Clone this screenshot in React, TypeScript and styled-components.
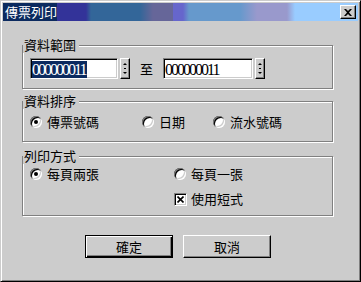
import React from "react";
import styled, { createGlobalStyle } from "styled-components";

const Global = createGlobalStyle`
  html, body { margin: 0; padding: 0; background: #cccccc; }
  body {
    font-family: "Noto Sans CJK TC", "Noto Sans CJK SC", "Noto Sans", sans-serif;
    font-size: 13px;
    color: #000;
  }
`;

const Window = styled.div`
  box-sizing: border-box;
  width: 361px;
  height: 282px;
  background: #cccccc;
  border: 1px solid;
  border-color: #cccccc #000 #000 #cccccc;
  box-shadow: inset 1px 1px #fff, inset -1px -1px #808080;
  padding: 2px;
  display: flex;
  flex-direction: column;
`;

const TitleBar = styled.div`
  height: 18px;
  flex: none;
  display: flex;
  align-items: center;
  justify-content: space-between;
  padding: 0 2px 0 2px;
  color: #fff;
  font-size: 13px;
  line-height: 16px;
  background: linear-gradient(
    90deg,
    #0b2a5f 0 54px,
    #333399 54px 83px,
    #336699 88px 137px,
    #666699 150px 170px,
    #6666cc 170px 180px,
    #6699cc 186px 237px,
    #9999cc 254px 284px,
    #99ccff 292px
  );
`;

const TitleText = styled.span`
  letter-spacing: 0;
`;

const Bevel = styled.div`
  box-sizing: border-box;
  background: #cccccc;
  border: 1px solid;
  border-color: #fff #000 #000 #fff;
  box-shadow: inset -1px -1px #808080;
`;

const CloseButton = styled(Bevel)`
  width: 16px;
  height: 14px;
  display: flex;
  align-items: center;
  justify-content: center;
`;

const Body = styled.div`
  display: flex;
  flex-direction: column;
  padding: 16px 25px 0 19px;
`;

const Group = styled.fieldset<{ $gap?: number }>`
  margin: ${(p) => p.$gap ?? 0}px 0 0 0;
  padding: 0;
  min-width: 0;
  border: 1px solid #808080;
  box-shadow: inset 1px 1px #fff, 1px 1px #fff;
`;

const Legend = styled.legend`
  padding: 0 3px 0 1px;
  margin: 0;
  line-height: 16px;
  font-size: 13px;
  background: #cccccc;
`;

const RangeRow = styled.div`
  display: flex;
  align-items: center;
  padding: 5px 0 9px 7px;
`;

const Field = styled.div`
  display: flex;
  gap: 2px;
`;

const TextBox = styled.div<{ $w: number }>`
  box-sizing: border-box;
  width: ${(p) => p.$w}px;
  height: 21px;
  background: #fff;
  border: 1px solid;
  border-color: #808080 #fff #fff #808080;
  box-shadow: inset 1px 1px #000, inset -1px -1px #cccccc;
  padding: 1px 0 0 1px;
  display: flex;
  align-items: center;
  font-family: "Liberation Serif", serif;
  font-size: 16px;
  letter-spacing: -2px;
  line-height: 17px;
`;

const Value = styled.span<{ $selected?: boolean }>`
  padding: 0 2px 0 0;
  background: ${(p) => (p.$selected ? "#0b2a5f" : "transparent")};
  color: ${(p) => (p.$selected ? "#fff" : "#000")};
`;

const Spinner = styled(Bevel)`
  width: 10px;
  height: 21px;
  display: flex;
  align-items: center;
  justify-content: center;
`;

const ToLabel = styled.span`
  margin: 0 10px 0 10px;
  line-height: 16px;
`;

const OptionGrid = styled.div<{ $cols: string; $pad: string; $rowGap?: number }>`
  display: grid;
  grid-template-columns: ${(p) => p.$cols};
  grid-auto-rows: 16px;
  row-gap: ${(p) => p.$rowGap ?? 0}px;
  padding: ${(p) => p.$pad};
`;

const Option = styled.label<{ $col?: number; $gap?: number }>`
  display: flex;
  align-items: center;
  gap: ${(p) => p.$gap ?? 5}px;
  line-height: 16px;
  grid-column: ${(p) => p.$col ?? "auto"};
`;

const Radio = styled.span<{ $on?: boolean }>`
  position: relative;
  box-sizing: border-box;
  width: 12px;
  height: 12px;
  border-radius: 50%;
  background: #fff;
  box-shadow: inset 1px 1px #808080, inset -1px -1px #fff,
    inset 2px 2px #000, inset -2px -2px #cccccc;
  &::after {
    content: "";
    display: ${(p) => (p.$on ? "block" : "none")};
    position: absolute;
    left: 4px;
    top: 4px;
    width: 4px;
    height: 4px;
    border-radius: 50%;
    background: #000;
  }
`;

const Check = styled.span`
  box-sizing: border-box;
  width: 13px;
  height: 13px;
  background: #fff;
  border: 1px solid;
  border-color: #808080 #fff #fff #808080;
  box-shadow: inset 1px 1px #000, inset -1px -1px #cccccc;
  display: flex;
  align-items: center;
  justify-content: center;
`;

const ButtonRow = styled.div`
  display: flex;
  gap: 10px;
  margin-top: 19px;
  padding-left: 63px;
`;

const PushButton = styled.button<{ $default?: boolean }>`
  box-sizing: border-box;
  width: 88px;
  height: 23px;
  padding: 0;
  margin: 0;
  font-family: inherit;
  font-size: 13px;
  line-height: 16px;
  color: #000;
  background: #cccccc;
  border: 1px solid;
  border-color: ${(p) => (p.$default ? "#000" : "#fff #000 #000 #fff")};
  box-shadow: ${(p) =>
    p.$default
      ? "inset 1px 1px #fff, inset -1px -1px #000, inset -2px -2px #808080"
      : "inset -1px -1px #808080"};
`;

const SpinIcon = () => (
  <svg width="6" height="15" viewBox="0 0 6 15">
    <path d="M1 4h4L3 2z" fill="#000" />
    <rect x="2" y="7" width="2" height="1" fill="#000" />
    <path d="M1 11h4L3 13z" fill="#000" />
  </svg>
);

const CloseIcon = () => (
  <svg width="8" height="7" viewBox="0 0 8 7">
    <path d="M0 0h2l2 2 2-2h2L5 3.5 8 7H6L4 5 2 7H0l3-3.5z" fill="#000" />
  </svg>
);

const CrossIcon = () => (
  <svg width="7" height="7" viewBox="0 0 7 7">
    <path d="M0.5 0.5l6 6M6.5 0.5l-6 6" stroke="#000" strokeWidth="1.6" />
  </svg>
);

export default function App() {
  return (
    <>
      <Global />
      <Window>
        <TitleBar>
          <TitleText>傳票列印</TitleText>
          <CloseButton>
            <CloseIcon />
          </CloseButton>
        </TitleBar>
        <Body>
          <Group>
            <Legend>資料範圍</Legend>
            <RangeRow>
              <Field>
                <TextBox $w={88}>
                  <Value $selected>000000011</Value>
                </TextBox>
                <Spinner>
                  <SpinIcon />
                </Spinner>
              </Field>
              <ToLabel>至</ToLabel>
              <Field>
                <TextBox $w={90}>
                  <Value>000000011</Value>
                </TextBox>
                <Spinner>
                  <SpinIcon />
                </Spinner>
              </Field>
            </RangeRow>
          </Group>

          <Group $gap={4}>
            <Legend>資料排序</Legend>
            <OptionGrid $cols="112px 71px auto" $pad="5px 0 11px 7px">
              <Option>
                <Radio $on />
                傳票號碼
              </Option>
              <Option>
                <Radio />
                日期
              </Option>
              <Option>
                <Radio />
                流水號碼
              </Option>
            </OptionGrid>
          </Group>

          <Group $gap={6}>
            <Legend>列印方式</Legend>
            <OptionGrid $cols="144px auto" $pad="2px 0 8px 7px" $rowGap={9}>
              <Option>
                <Radio $on />
                每頁兩張
              </Option>
              <Option>
                <Radio />
                每頁一張
              </Option>
              <Option $col={2} $gap={4}>
                <Check>
                  <CrossIcon />
                </Check>
                使用短式
              </Option>
            </OptionGrid>
          </Group>

          <ButtonRow>
            <PushButton $default>確定</PushButton>
            <PushButton>取消</PushButton>
          </ButtonRow>
        </Body>
      </Window>
    </>
  );
}
